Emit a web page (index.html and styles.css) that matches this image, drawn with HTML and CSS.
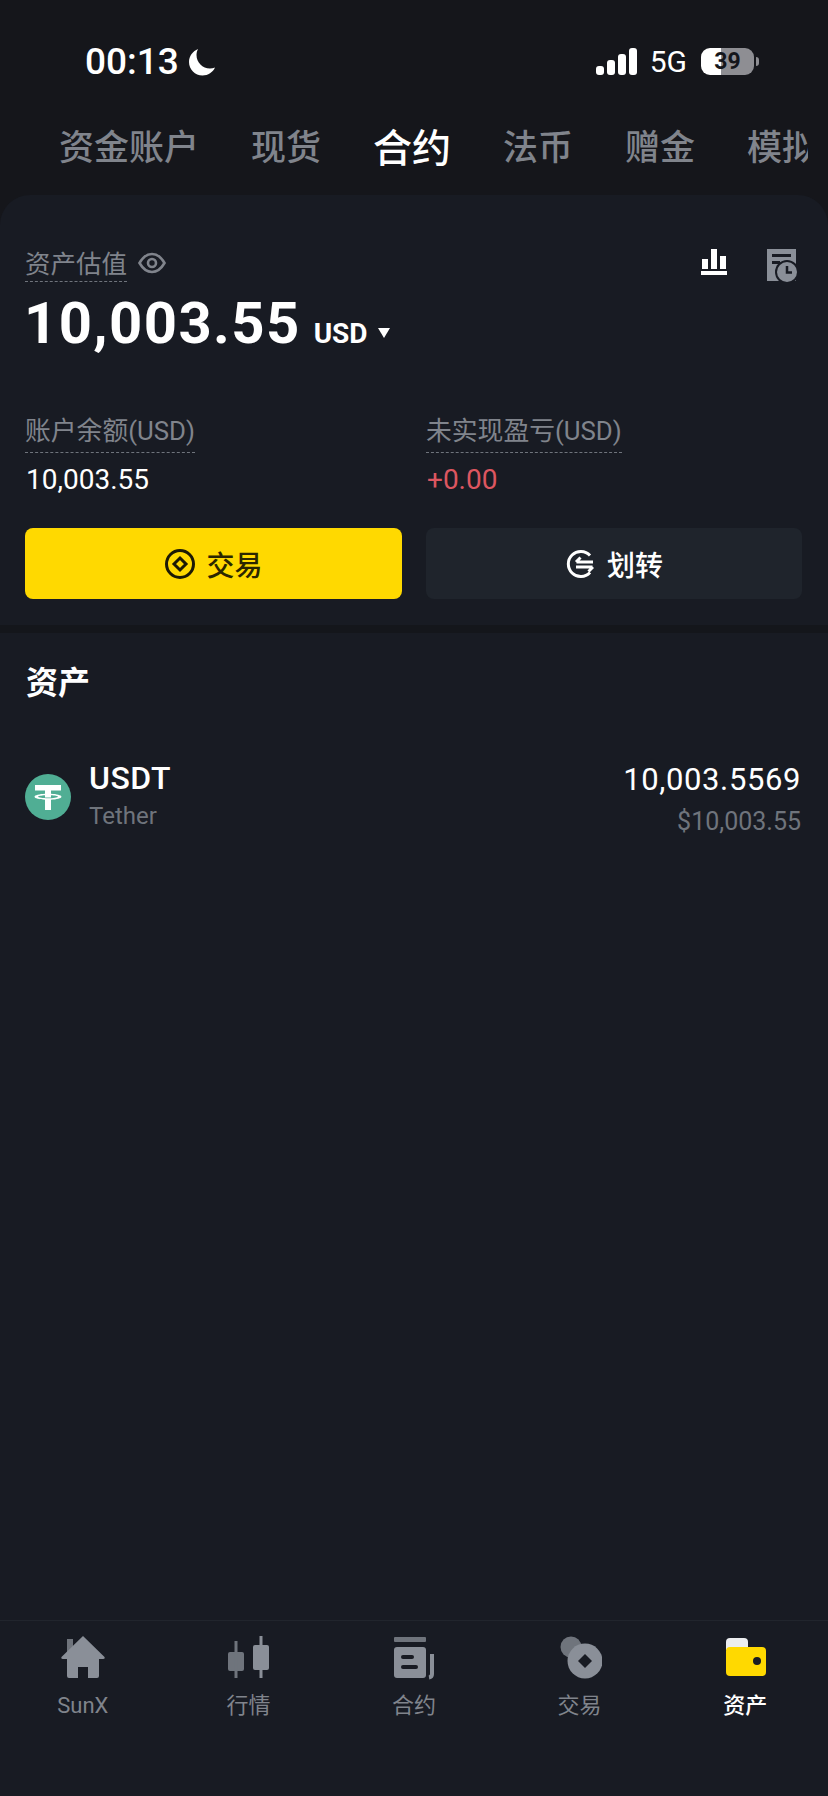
FILE: index.html
```html
<!DOCTYPE html>
<html lang="zh-CN">
<head>
  <meta charset="UTF-8" />
  <meta name="viewport" content="width=device-width, initial-scale=1.0"/>
  <title>资产</title>
  <link rel="stylesheet" href="styles.css">
</head>
<body>
  <div class="app">
    <div class="status">
      <div class="status-left">
        <span class="time">00:13</span>
        <svg class="moon" width="28" height="28" viewBox="0 0 28 28"><path fill="#fff" d="M10 1C5 3 1 8 1 14c0 7.500 6 13.500 13.500 13.500 5.500 0 10.500-3.500 12.500-8-1.500.7-3.200 1-5 1C14.500 20.500 8.500 14.500 8.500 7c0-2.200.5-4.200 1.500-6z"/></svg>
      </div>
      <div class="status-right">
        <div class="signal"><i class="b1"></i><i class="b2"></i><i class="b3"></i><i class="b4"></i></div>
        <span class="net">5G</span>
        <div class="battery"><span>39</span></div>
        <i class="nub"></i>
      </div>
    </div>

    <div class="tabs">
      <span class="tab">资金账户</span>
      <span class="tab">现货</span>
      <span class="tab active">合约</span>
      <span class="tab">法币</span>
      <span class="tab">赠金</span>
      <span class="tab">模拟</span>
    </div>

    <div class="panel">
      <div class="panel-head">
        <span class="dash-label">资产估值</span>
        <svg class="eye" width="28" height="22" viewBox="0 0 28 22" fill="none" stroke="#80848c" stroke-width="2.600"><path d="M1.500 11C5 5 9 2 14 2s9 3 12.500 9C23 17 19 20 14 20S5 17 1.500 11z"/><circle cx="14" cy="11" r="4"/></svg>
        <div class="head-icons">
          <svg width="26" height="26" viewBox="0 0 26 26" fill="#fff"><rect x="1" y="10" width="6" height="10"/><rect x="10" y="0" width="6" height="20"/><rect x="19" y="7" width="6" height="13"/><rect x="0" y="22" width="26" height="4"/></svg>
          <svg width="30" height="34" viewBox="0 0 30 34"><rect x="0" y="0" width="29" height="32" fill="#8a8f98"/><rect x="5" y="5" width="19" height="3" fill="#181b23"/><rect x="5" y="12" width="8" height="3" fill="#181b23"/><circle cx="20" cy="23" r="12" fill="#181b23"/><circle cx="20" cy="23" r="10" fill="#8a8f98"/><path d="M20 17v6.500h5" fill="none" stroke="#181b23" stroke-width="2.500"/></svg>
        </div>
      </div>
      <div class="total">
        <span class="total-num">10,003.55</span>
        <span class="total-unit">USD</span>
        <i class="caret"></i>
      </div>
      <div class="balances">
        <div>
          <span class="dash-label bal-label">账户余额(USD)</span>
          <div class="bal-val">10,003.55</div>
        </div>
        <div>
          <span class="dash-label bal-label">未实现盈亏(USD)</span>
          <div class="bal-val red">+0.00</div>
        </div>
      </div>
      <div class="actions">
        <button class="btn btn-yellow">
          <svg width="32" height="32" viewBox="0 0 32 32" fill="none" stroke="#1d1a05" stroke-width="3"><circle cx="16" cy="16" r="13.500"/><path d="M16 10l6 6-6 6-6-6z"/></svg>
          交易
        </button>
        <button class="btn btn-dark">
          <svg width="29" height="28" viewBox="0 0 29 28" fill="none" stroke="#fff" stroke-width="3"><path d="M25 5.500A12.500 12.500 0 1 0 25 22.500"/><path d="M28 12H11.500M15.500 7.500L11 12"/><path d="M11 17h16.500M23.500 21.500L28 17"/></svg>
          划转
        </button>
      </div>
    </div>
    <div class="band"></div>

    <div class="assets">
      <h2 class="assets-title">资产</h2>
      <div class="asset-row">
        <svg class="coin" width="46" height="46" viewBox="0 0 46 46"><circle cx="23" cy="23" r="23" fill="#50ae94"/><path fill="#fff" d="M10 11h26v5.500H26v3.300c5.500.3 10.500 1.300 10.500 3s-5 2.700-10.500 3V36h-6V25.800c-5.500-.3-10.500-1.300-10.500-3s5-2.700 10.500-3v-3.300H10zm10 10.300c-3.800.2-7 .8-7 1.500s5 1.500 10 1.500 10-.7 10-1.500c0-.7-3.200-1.300-7-1.500v2.200h-6z"/></svg>
        <div class="asset-name">
          <div class="symbol">USDT</div>
          <div class="fullname">Tether</div>
        </div>
        <div class="asset-val">
          <div class="amount">10,003.5569</div>
          <div class="fiat">$10,003.55</div>
        </div>
      </div>
    </div>

    <nav class="tabbar">
      <div class="nav-item">
        <svg width="44" height="44" viewBox="0 0 44 44"><rect x="6" y="3" width="6" height="14" fill="#6f747c"/><path fill="#8a8f98" d="M22 0L43.500 21q.8 2-1.500 2H38v17q0 2-2 2H27V31h-10v11H8q-2 0-2-2V23H2q-2.300 0-1.500-2z"/></svg>
        <span>SunX</span>
      </div>
      <div class="nav-item">
        <svg width="44" height="44" viewBox="0 0 44 44"><g fill="#6f747c"><rect x="2" y="16" width="16" height="19" rx="2"/><rect x="8.500" y="5" width="3" height="37"/></g><g fill="#8a8f98"><rect x="27" y="9" width="16" height="25" rx="2"/><rect x="33.500" y="0" width="3" height="42"/></g></svg>
        <span>行情</span>
      </div>
      <div class="nav-item">
        <svg width="44" height="44" viewBox="0 0 44 44"><rect x="2" y="1" width="32" height="5" rx="1" fill="#6f747c"/><rect x="2" y="11" width="32" height="31" rx="3" fill="#8a8f98"/><rect x="9" y="19" width="13" height="4" rx="2" fill="#181b23"/><rect x="9" y="29" width="17" height="4" rx="2" fill="#181b23"/><path d="M40 18v20q0 3-3 3.500" fill="none" stroke="#8a8f98" stroke-width="4"/></svg>
        <span>合约</span>
      </div>
      <div class="nav-item">
        <svg width="44" height="44" viewBox="0 0 44 44"><circle cx="13" cy="11" r="10.500" fill="#6f747c"/><circle cx="27" cy="25" r="17.500" fill="#8a8f98"/><path d="M27 18l7 7-7 7-7-7z" fill="#181b23"/></svg>
        <span>交易</span>
      </div>
      <div class="nav-item on">
        <svg width="44" height="44" viewBox="0 0 44 44"><path d="M3 14V6q0-4 4-4h14q4 0 4 4v8z" fill="#eceef0"/><rect x="3" y="11" width="40" height="29" rx="4" fill="#ffd900"/><circle cx="34" cy="25" r="4" fill="#181b23"/></svg>
        <span>资产</span>
      </div>
    </nav>
  </div>
</body>
</html>
```

FILE: styles.css
```css
* { box-sizing: border-box; }
body {
  margin: 0;
  background: #15161b;
  font-family: Roboto, "Noto Sans CJK SC", sans-serif;
  color: #fff;
}
.app {
  width: 828px;
  height: 1796px;
  display: flex;
  flex-direction: column;
  overflow: hidden;
}

/* status bar */
.status {
  height: 100px;
  padding: 47px 69px 0 85px;
  display: flex;
  justify-content: space-between;
  align-items: flex-start;
}
.status-left { display: flex; align-items: center; gap: 9px; height: 29px; }
.time { font-size: 37px; line-height: 29px; font-weight: 500; }
.status-right { display: flex; align-items: center; height: 29px; }
.signal { display: flex; align-items: flex-end; gap: 3.500px; height: 27px; margin-right: 13px; }
.signal i { display: block; width: 7.500px; background: #fff; border-radius: 3px; }
.signal .b1 { height: 9px; }
.signal .b2 { height: 15px; }
.signal .b3 { height: 21px; }
.signal .b4 { height: 27px; }
.net { font-size: 30px; line-height: 29px; margin-right: 14px; }
.battery {
  width: 53px;
  height: 27px;
  border-radius: 9px;
  background: linear-gradient(to right, #fff 38%, #8e8e93 38%);
  color: #15161b;
  font-size: 23px;
  font-weight: 700;
  line-height: 27px;
  text-align: center;
}
.nub { width: 3px; height: 9px; margin-left: 2px; background: #8e8e93; border-radius: 0 3px 3px 0; }

/* top tabs */
.tabs {
  height: 95px;
  margin-right: 20px;
  padding: 3px 0 0 59px;
  display: flex;
  align-items: center;
  gap: 52px;
  overflow: hidden;
}
.tab {
  flex-shrink: 0;
  font-size: 35px;
  line-height: 40px;
  color: #80848c;
  font-weight: 500;
}
.tab.active { font-size: 39px; color: #fff; }

/* account summary */
.panel {
  height: 430px;
  padding: 54px 26px 0 25px;
  background: #181b23;
  border-radius: 30px 30px 0 0;
}
.panel-head { display: flex; align-items: flex-start; }
.dash-label {
  display: inline-block;
  font-size: 25.500px;
  line-height: 30px;
  padding-bottom: 2px;
  color: #80848c;
  border-bottom: 1px dashed #6f747c;
}
.eye { margin: 3px 0 0 11px; }
.head-icons { margin-left: auto; display: flex; align-items: flex-start; gap: 40px; margin-right: 5px; }
.total { display: flex; align-items: baseline; margin-top: 10px; }
.total-num { font-size: 58px; line-height: 60px; font-weight: 700; letter-spacing: 1.400px; margin-left: -1px; }
.total-unit { font-size: 28px; font-weight: 700; margin-left: 13px; }
.caret {
  align-self: flex-start;
  width: 0;
  height: 0;
  margin: 35px 0 0 10px;
  border-left: 6px solid transparent;
  border-right: 6px solid transparent;
  border-top: 10px solid #fff;
}
.balances { display: grid; grid-template-columns: 377px 1fr; gap: 24px; margin-top: 63px; }
.bal-label { font-size: 25.800px; padding-bottom: 6px; }
.bal-val { font-size: 28px; line-height: 34px; margin-top: 10px; margin-left: 1px; }
.bal-val.red { color: #dc5660; }
.actions { display: grid; grid-template-columns: 377px 376px; gap: 24px; margin-top: 31px; }
.btn {
  height: 71px;
  border: none;
  border-radius: 8px;
  display: flex;
  align-items: center;
  justify-content: center;
  gap: 10px;
  font-family: inherit;
  font-size: 28px;
  font-weight: 500;
}
.btn-yellow { background: #ffd900; color: #2b2600; }
.btn-dark { background: #1f242c; color: #fff; gap: 13px; }
.band { height: 8px; background: #14161b; }

/* asset list */
.assets { flex: 1; background: #181b23; padding: 0 27px 0 25px; }
.assets-title {
  margin: 29px 0 0 1px;
  font-size: 32px;
  line-height: 42px;
  font-weight: 700;
}
.asset-row { display: flex; align-items: flex-start; margin-top: 55px; }
.coin { margin-top: 15px; }
.asset-name { margin-left: 18px; }
.symbol { font-size: 32px; line-height: 38px; font-weight: 500; letter-spacing: .5px; }
.fullname { font-size: 24px; line-height: 28px; margin-top: 5px; color: #6f747c; }
.asset-val { margin-left: auto; text-align: right; }
.amount { font-size: 31px; line-height: 38px; margin-top: 2px; letter-spacing: .6px; }
.fiat { font-size: 25px; line-height: 30px; margin-top: 8px; color: #6f747c; }

/* bottom nav */
.tabbar {
  height: 176px;
  padding-top: 15px;
  background: #181b23;
  border-top: 1px solid #21252d;
  display: grid;
  grid-template-columns: repeat(5, 1fr);
}
.nav-item { display: flex; flex-direction: column; align-items: center; }
.nav-item span { font-size: 22px; line-height: 30px; margin-top: 11px; color: #80848c; }
.nav-item.on span { color: #fff; font-weight: 500; }
```
